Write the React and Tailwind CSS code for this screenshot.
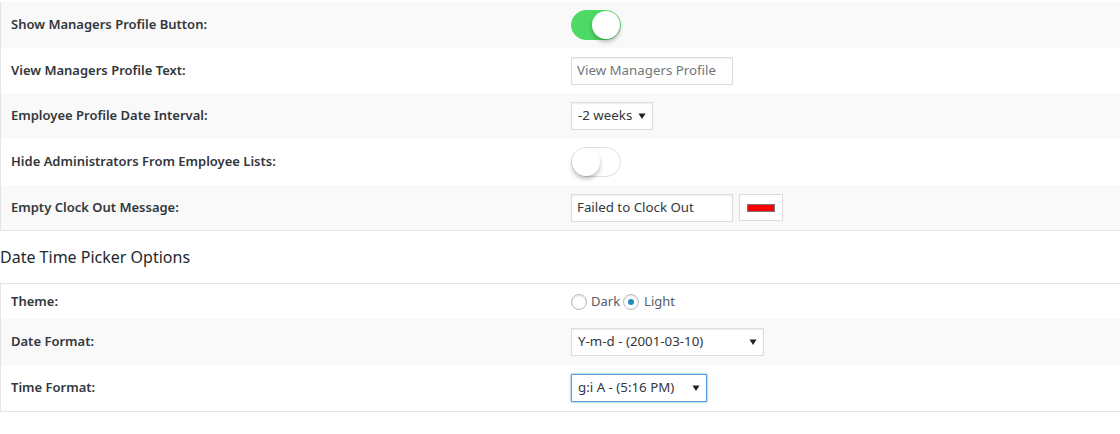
import React from "react";

const font = { fontFamily: '"Noto Sans", "Open Sans", sans-serif' };

function Toggle({ on }) {
  return (
    <div
      className={
        "relative h-[30px] w-[50px] rounded-full border " +
        (on ? "bg-[#4cd964] border-[#4cd964]" : "bg-white border-[#dfdfdf]")
      }
    >
      <div
        className={
          "absolute top-[0px] h-[28px] w-[28px] rounded-full bg-white shadow-[0_3px_4px_rgba(0,0,0,0.25)] " +
          (on ? "left-[20px]" : "left-[0px]")
        }
      />
    </div>
  );
}

function Arrow() {
  return (
    <svg width="8" height="8" viewBox="0 0 8 8" className="shrink-0">
      <path d="M0.5 1.5 H7.5 L4 7 Z" fill="#222" />
    </svg>
  );
}

function Select({ text, width, focus }) {
  return (
    <div
      className={
        "flex h-[28px] items-center justify-between whitespace-nowrap bg-white pl-[6px] pr-[6px] text-[13.3px] text-[#32373c] border " +
        (focus
          ? "border-[#5b9dd9] shadow-[0_0_2px_rgba(30,140,190,0.8)]"
          : "border-[#dddddd] shadow-[inset_0_1px_2px_rgba(0,0,0,0.07)]")
      }
      style={{ width }}
    >
      <span>{text}</span>
      <Arrow />
    </div>
  );
}

function Input({ text, placeholder }) {
  return (
    <div className="flex h-[28px] w-[162px] items-center whitespace-nowrap border border-[#dddddd] bg-white px-[5px] text-[13.3px] shadow-[inset_0_1px_2px_rgba(0,0,0,0.07)]">
      <span className={placeholder ? "text-[#72777c]" : "text-[#32373c]"}>{text}</span>
    </div>
  );
}

function Row({ label, h, alt, children }) {
  return (
    <div
      className={"flex items-center " + (alt ? "bg-[#f9f9f9]" : "bg-white")}
      style={{ height: h }}
    >
      <div className="w-[570px] shrink-0 pl-[10px] text-[13px] font-semibold text-[#32373c]">
        {label}
      </div>
      <div className="flex items-center gap-[6px]">{children}</div>
    </div>
  );
}

function Radio({ checked }) {
  return (
    <div className="flex h-[16px] w-[16px] items-center justify-center rounded-full border border-[#b4b9be] bg-white shadow-[inset_0_1px_2px_rgba(0,0,0,0.1)]">
      {checked && <div className="h-[6px] w-[6px] rounded-full bg-[#1e8cbe]" />}
    </div>
  );
}

export default function App() {
  return (
    <div className="h-[434px] w-[1120px] overflow-hidden bg-white" style={font}>
      <div className="pt-[2px]">
        <div className="border-l border-b border-[#e5e5e5]">
          <Row label="Show Managers Profile Button:" h={46} alt>
            <Toggle on />
          </Row>
          <Row label="View Managers Profile Text:" h={45}>
            <Input text="View Managers Profile" placeholder />
          </Row>
          <Row label="Employee Profile Date Interval:" h={46} alt>
            <Select text="-2 weeks" width={82} />
          </Row>
          <Row label="Hide Administrators From Employee Lists:" h={46}>
            <Toggle />
          </Row>
          <Row label="Empty Clock Out Message:" h={45} alt>
            <Input text="Failed to Clock Out" />
            <div className="flex h-[27px] w-[44px] items-center justify-center border border-[#dddddd] bg-white">
              <div className="h-[8px] w-[28px] border border-[#777] bg-[#ff0000]" />
            </div>
          </Row>
        </div>
        <h2 className="flex h-[52px] items-center text-[16px] font-normal text-[#23282d]">
          Date Time Picker Options
        </h2>
        <div className="border-l border-y border-[#e5e5e5]">
          <Row label="Theme:" h={35}>
            <div className="flex items-center text-[13px] text-[#555d66]">
              <Radio />
              <span className="ml-[4px] mr-[3px]">Dark</span>
              <Radio checked />
              <span className="ml-[5px]">Light</span>
            </div>
          </Row>
          <Row label="Date Format:" h={46} alt>
            <Select text="Y-m-d - (2001-03-10)" width={193} />
          </Row>
          <Row label="Time Format:" h={46}>
            <Select text="g:i A - (5:16 PM)" width={136} focus />
          </Row>
        </div>
      </div>
    </div>
  );
}
